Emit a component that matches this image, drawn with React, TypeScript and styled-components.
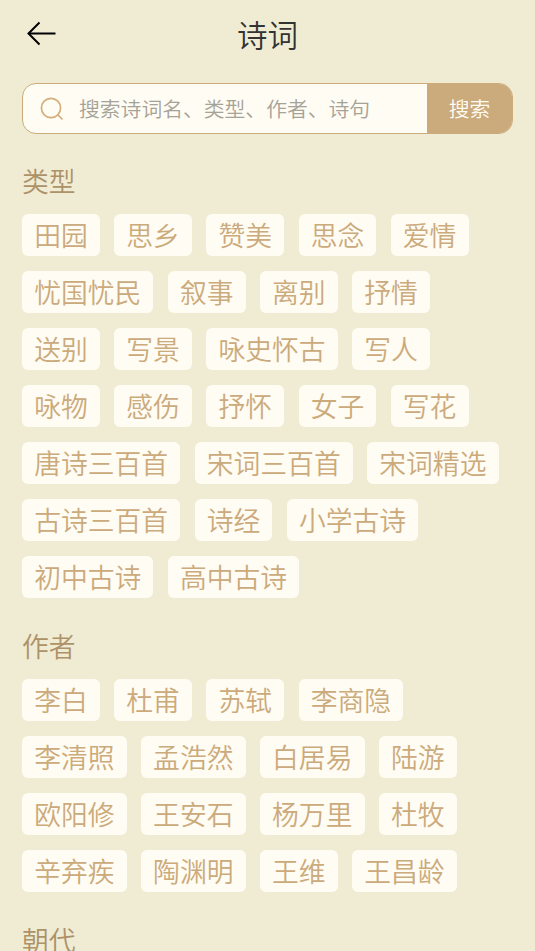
import React from 'react';
import styled, { createGlobalStyle } from 'styled-components';

const GlobalStyle = createGlobalStyle`
  html, body {
    margin: 0;
    padding: 0;
    height: 100%;
    overflow: hidden;
    background: #f0ecd4;
  }
  * {
    box-sizing: border-box;
  }
`;

const FONT = `'Noto Sans CJK SC', 'Noto Sans', sans-serif`;

const Page = styled.div`
  width: 535px;
  height: 951px;
  overflow: hidden;
  background: #f0ecd4;
  font-family: ${FONT};
  font-weight: 350;
`;

const Header = styled.header`
  position: relative;
  height: 70px;
  display: flex;
  align-items: center;
  justify-content: center;
`;

const BackButton = styled.div`
  position: absolute;
  left: 26px;
  top: 21px;
  width: 30px;
  height: 25px;
  line-height: 0;
`;

const Title = styled.h1`
  margin: -3px 0 0;
  font-size: 30.5px;
  font-weight: 350;
  color: #333;
`;

const SearchBar = styled.div`
  display: flex;
  height: 51px;
  margin: 13px 22px 0;
  border: 1px solid #cbaa7b;
  border-radius: 14px;
  background: #fffcf3;
  overflow: hidden;
`;

const SearchField = styled.div`
  flex: 1;
  display: flex;
  align-items: center;
  padding-left: 17px;
  gap: 15px;
`;

const Placeholder = styled.span`
  margin-top: -1px;
  font-size: 20.8px;
  color: #a5a297;
`;

const SearchButton = styled.div`
  width: 85px;
  padding-bottom: 2px;
  display: flex;
  align-items: center;
  justify-content: center;
  background: #cbaa7b;
  color: #fffcf3;
  font-size: 20.8px;
`;

const Section = styled.section`
  padding: 0 22px;
  margin-bottom: 28px;
`;

const SectionTitle = styled.h2`
  margin: 0 0 13px;
  height: 40px;
  line-height: 40px;
  font-size: 26.8px;
  font-weight: 350;
  color: #ad9268;
`;

const TagList = styled.div`
  display: flex;
  flex-wrap: wrap;
  gap: 15px 14.3px;
`;

const Tag = styled.span`
  height: 42px;
  line-height: 42px;
  padding: 0 12.15px;
  border-radius: 6px;
  background: #fffcf3;
  color: #cbaa7b;
  font-size: 26.8px;
  white-space: nowrap;
`;

const Content = styled.main`
  padding-top: 27px;
`;

const sections = [
  {
    title: '类型',
    tags: ['田园', '思乡', '赞美', '思念', '爱情', '忧国忧民', '叙事', '离别', '抒情', '送别', '写景', '咏史怀古', '写人', '咏物', '感伤', '抒怀', '女子', '写花', '唐诗三百首', '宋词三百首', '宋词精选', '古诗三百首', '诗经', '小学古诗', '初中古诗', '高中古诗'],
  },
  {
    title: '作者',
    tags: ['李白', '杜甫', '苏轼', '李商隐', '李清照', '孟浩然', '白居易', '陆游', '欧阳修', '王安石', '杨万里', '杜牧', '辛弃疾', '陶渊明', '王维', '王昌龄'],
  },
  {
    title: '朝代',
    tags: [],
  },
];

const App = () => (
  <Page>
    <GlobalStyle />
    <Header>
      <BackButton>
        <svg width="32" height="25" viewBox="0 0 32 25" fill="none" stroke="#000" strokeWidth="2">
          <path d="M29.5 12.5H2.5" />
          <path d="M13.5 1.5L2.5 12.5l11 11" />
        </svg>
      </BackButton>
      <Title>诗词</Title>
    </Header>
    <SearchBar>
      <SearchField>
        <svg width="24" height="24" viewBox="0 0 24 24" fill="none" stroke="#d4ae7c" strokeWidth="1.7">
          <circle cx="11" cy="11" r="9.6" />
          <path d="M18 18l4.5 4.5" />
        </svg>
        <Placeholder>搜索诗词名、类型、作者、诗句</Placeholder>
      </SearchField>
      <SearchButton>搜索</SearchButton>
    </SearchBar>
    <Content>
      {sections.map((section) => (
        <Section key={section.title}>
          <SectionTitle>{section.title}</SectionTitle>
          <TagList>
            {section.tags.map((tag) => (
              <Tag key={tag}>{tag}</Tag>
            ))}
          </TagList>
        </Section>
      ))}
    </Content>
  </Page>
);

export default App;
